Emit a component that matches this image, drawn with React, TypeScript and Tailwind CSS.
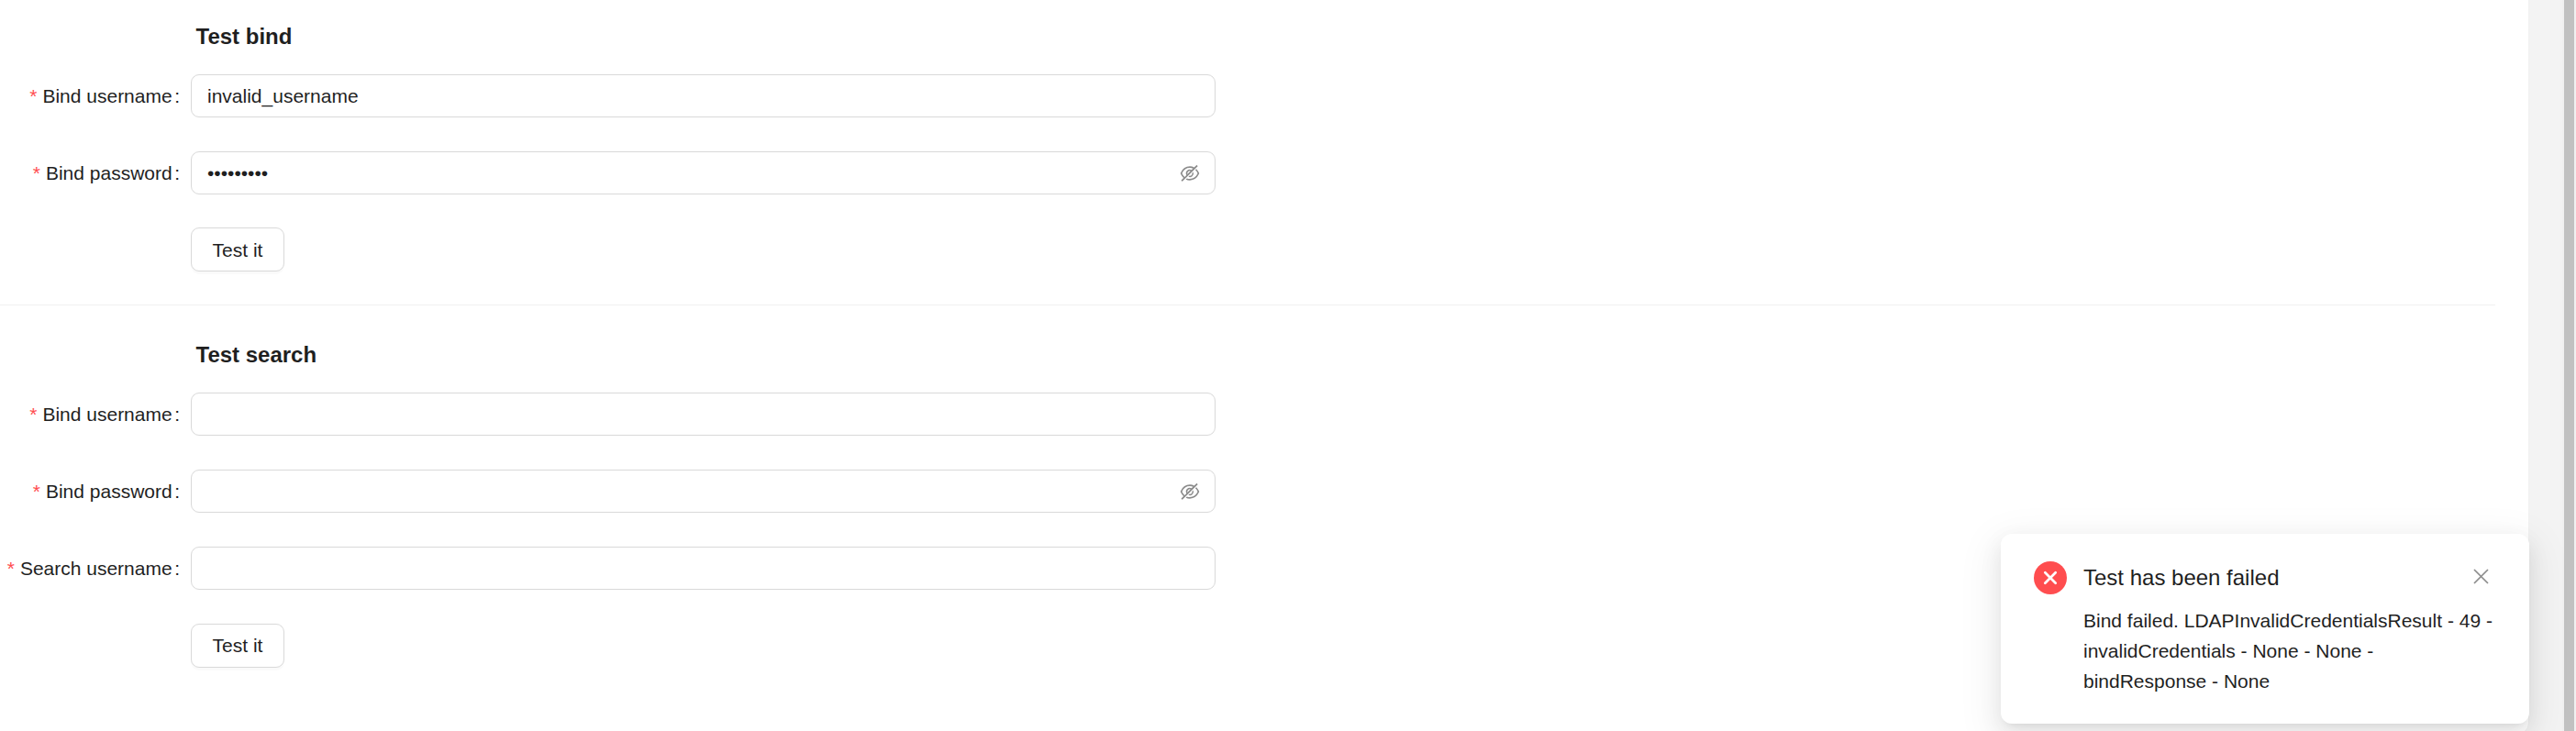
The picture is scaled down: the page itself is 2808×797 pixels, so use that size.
import React from "react";
import { AiOutlineEyeInvisible } from "react-icons/ai";

type FieldProps = { label: string; value?: string; password?: boolean };

function Field({ label, value = "", password = false }: FieldProps) {
  return (
    <div className="mb-[37px] flex h-[47px] items-center">
      <label className="flex w-[208px] shrink-0 justify-end whitespace-pre pr-[12px] leading-[33px]">
        <span className="mr-[6px] font-[SimSun,'Liberation_Sans',sans-serif] text-[#ff4d4f]">*</span>
        {label}
        <span className="ml-[2.5px]">:</span>
      </label>
      <div className="flex h-[47px] w-[1117px] items-center rounded-[9px] border border-[#d9d9d9] bg-white pl-[17px] pr-[15px]">
        <input
          type={password ? "password" : "text"}
          defaultValue={value}
          className="min-w-0 flex-1 bg-transparent outline-none"
        />
        {password && <AiOutlineEyeInvisible className="size-[24px] text-[#8c8c8c]" />}
      </div>
    </div>
  );
}

function TestButton({ className = "" }: { className?: string }) {
  return (
    <button
      className={`ml-[208px] block h-[48px] w-[102px] rounded-[9px] border border-[#d9d9d9] bg-white shadow-[0_3px_0_rgba(0,0,0,0.02)] ${className}`}
    >
      Test it
    </button>
  );
}

function Notification() {
  return (
    <div className="absolute left-[2181px] top-[582px] flex h-[207px] w-[576px] rounded-[12px] bg-white pl-[36px] pt-[30px] shadow-[0_9px_24px_0_rgba(0,0,0,0.08),0_4.5px_9px_-6px_rgba(0,0,0,0.12),0_13.5px_42px_12px_rgba(0,0,0,0.05)]">
      <svg viewBox="0 0 36 36" className="size-[36px] shrink-0">
        <circle cx="18" cy="18" r="18" fill="#ff4d4f" />
        <path d="M12.3 12.3 23.7 23.7M23.7 12.3 12.3 23.7" stroke="#fff" strokeWidth="2.7" strokeLinecap="round" />
      </svg>
      <div className="ml-[18px] w-[450px]">
        <div className="flex h-[36px] items-center text-[24px]">Test has been failed</div>
        <p className="mt-[12px] leading-[33px]">
          Bind failed. LDAPInvalidCredentialsResult - 49 - invalidCredentials - None - None - bindResponse - None
        </p>
      </div>
      <svg viewBox="0 0 21 21" className="absolute right-[42px] top-[36px] size-[21px]">
        <path d="M3 3 18 18M18 3 3 18" stroke="#8c8c8c" strokeWidth="1.7" />
      </svg>
    </div>
  );
}

export default function App() {
  return (
    <div className="relative flex h-[797px] w-[2808px] overflow-hidden bg-[#f3f3f3] font-['Liberation_Sans',sans-serif] text-[21px] text-[#1f1f1f]">
      <main className="h-[800px] w-[2756px] shrink-0 rounded-br-[12px] bg-white shadow-[0_0_2px_rgba(0,0,0,0.04)]">
        <section className="h-[332px] pt-[22px]">
          <h2 className="mb-[23px] ml-[213.5px] text-[24px] font-bold leading-[36px]">Test bind</h2>
          <Field label="Bind username" value="invalid_username" />
          <Field label="Bind password" value="invalid_p" password />
          <div className="-mt-px">
            <TestButton className="pt-[2px]" />
          </div>
        </section>
        <hr className="w-[2720px] border-[#f0f0f0]" />
        <section className="pt-[36px]">
          <h2 className="mb-[23px] ml-[213.5px] text-[24px] font-bold leading-[36px]">Test search</h2>
          <Field label="Bind username" />
          <Field label="Bind password" password />
          <Field label="Search username" />
          <TestButton />
        </section>
      </main>
      <div className="flex-1" />
      <Notification />
      <div className="flex w-[15px] justify-center bg-[#f0f0f0]">
        <div className="h-full w-[11px] bg-[#c1c1c1]" />
      </div>
    </div>
  );
}
